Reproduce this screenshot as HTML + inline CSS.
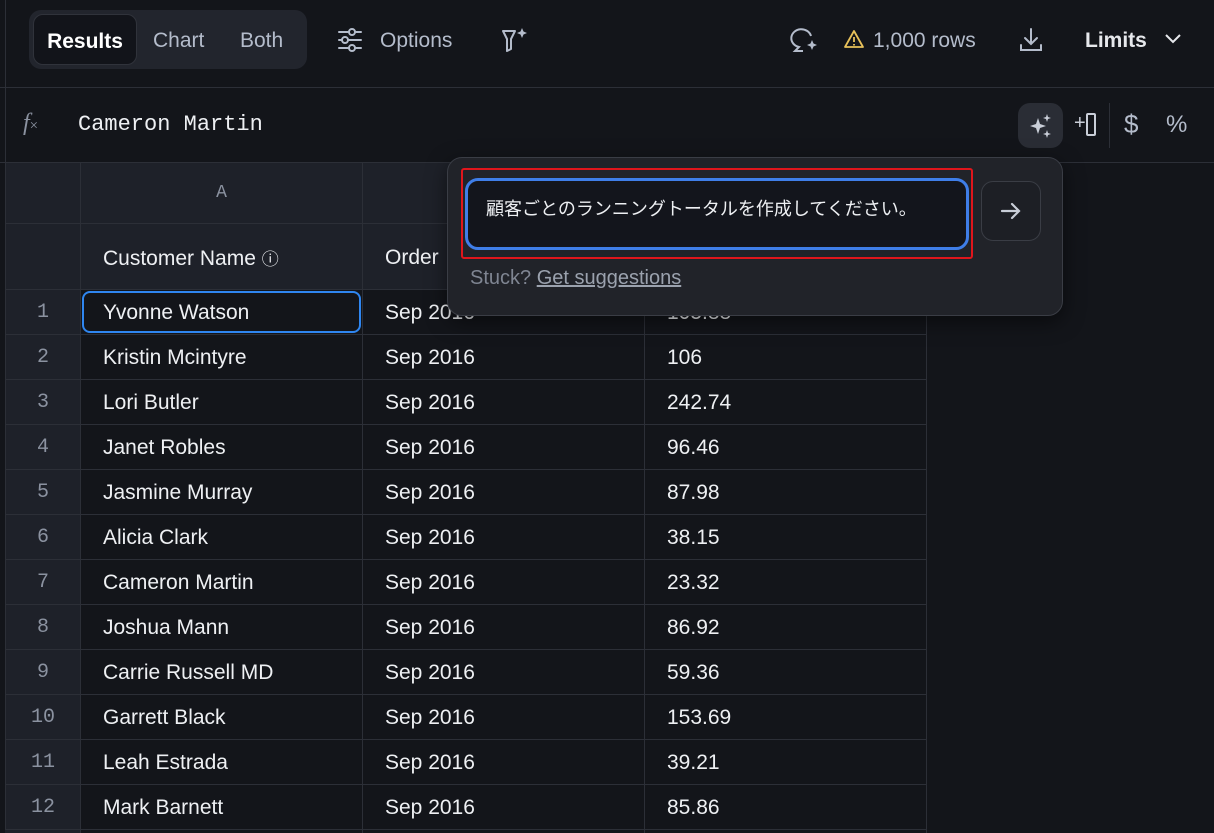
<!DOCTYPE html>
<html style="width:1214px;height:833px;overflow:hidden"><head><meta charset="utf-8"><style>
*{box-sizing:border-box;margin:0;padding:0}
body{width:1214px;height:833px;background:#13151a;font-family:"Liberation Sans","Noto Sans CJK JP",sans-serif;color:#e6e8ec;position:relative;overflow:hidden}
.abs{position:absolute}
.vl{position:absolute;left:5px;top:0;width:1px;height:833px;background:#2c2f37}
.tabs{left:29px;top:10px;width:278px;height:59px;background:#22252d;border-radius:12px}
.tab{position:absolute;top:4px;height:51px;line-height:53px;font-size:21px;color:#b4bccb}
.sel{left:4px;width:104px;background:#12141a;border:1px solid #30333b;border-radius:10px;color:#fff;text-align:center;font-weight:bold}
.hl{position:absolute;left:0;width:1214px;height:1px;background:#2c2f37}
.mono{font-family:"Liberation Mono","DejaVu Sans Mono",monospace}
table{position:absolute;left:5px;top:162px;border-collapse:collapse}
td{border:1px solid #2c2f37;height:45px;font-size:21px;padding-left:22px;padding-top:2px;color:#eef0f3}
td.n{width:75px;background:#1e2129;color:#8b92a0;text-align:center;padding:0;font-family:"Liberation Mono","DejaVu Sans Mono",monospace;font-size:20px}
td.c{width:282px}
tr.h td{background:#1e2129}
</style></head><body>
<div class="vl"></div>
<div class="abs" style="left:5px;top:829px;width:75px;height:4px;background:#1e2129"></div>
<div class="abs" style="left:80px;top:829px;width:1px;height:4px;background:#2c2f37"></div>
<div class="abs" style="left:362px;top:829px;width:1px;height:4px;background:#2c2f37"></div>
<div class="abs" style="left:644px;top:829px;width:1px;height:4px;background:#2c2f37"></div>
<div class="abs" style="left:926px;top:829px;width:1px;height:4px;background:#2c2f37"></div>
<div class="abs tabs">
 <div class="tab sel">Results</div>
 <div class="tab" style="left:124px">Chart</div>
 <div class="tab" style="left:211px">Both</div>
</div>
<svg class="abs" style="left:337px;top:27px" width="26" height="26" viewBox="0 0 26 26" fill="none" stroke="#b4bccb" stroke-width="2" stroke-linecap="round"><path d="M2 5h22M2 13h22M2 21h22"/><circle cx="15" cy="5" r="3" fill="#13151a"/><circle cx="8" cy="13" r="3" fill="#13151a"/><circle cx="15" cy="21" r="3" fill="#13151a"/></svg>
<div class="abs" style="left:380px;top:29px;font-size:21px;color:#b4bccb">Options</div>
<svg class="abs" style="left:500px;top:26px" width="30" height="28" viewBox="0 0 30 28" fill="none" stroke="#b4bccb" stroke-width="2" stroke-linejoin="round"><path d="M3 5h12l-4 8v10l-4 2V13z"/><path d="M22 2l1.5 3.5 3.5 1.5-3.5 1.5L22 12l-1.5-3.5L17 7l3.5-1.5z" fill="#b4bccb" stroke="none"/></svg>
<svg class="abs" style="left:790px;top:27px" width="30" height="28" viewBox="0 0 30 28" fill="none" stroke="#b4bccb" stroke-width="2"><path d="M21 9a10 9 0 1 0-12 11l-4 4h8"/><path d="M22 13l1.5 3.5 3.5 1.5-3.5 1.5L22 23l-1.5-3.5L17 18l3.5-1.5z" fill="#b4bccb" stroke="none"/></svg>
<svg class="abs" style="left:843px;top:29px" width="22" height="20" viewBox="0 0 22 20" fill="none" stroke="#e8c15a" stroke-width="1.8" stroke-linejoin="round"><path d="M11 2L20 18H2z"/><path d="M11 8v5M11 15v1.5"/></svg>
<div class="abs" style="left:873px;top:29px;font-size:21px;color:#b4bccb">1,000 rows</div>
<svg class="abs" style="left:1018px;top:27px" width="26" height="26" viewBox="0 0 26 26" fill="none" stroke="#b4bccb" stroke-width="2" stroke-linecap="round"><path d="M13 2v14M7 11l6 6 6-6M3 18v5h20v-5"/></svg>
<div class="abs" style="left:1085px;top:29px;font-size:21px;color:#e6e8ec;font-weight:bold">Limits</div>
<svg class="abs" style="left:1163px;top:31px" width="20" height="14" viewBox="0 0 20 14" fill="none" stroke="#e6e8ec" stroke-width="2"><path d="M3 4l7 7 7-7"/></svg>
<div class="hl" style="top:87px"></div>
<div class="abs" style="left:23px;top:110px;font-size:24px;font-style:italic;font-family:'Liberation Serif',serif;color:#8b92a0">f<span style="font-size:15px;font-style:normal">×</span></div>
<div class="abs mono" style="left:78px;top:112px;font-size:22px;color:#eef0f3">Cameron Martin</div>
<div class="abs" style="left:1018px;top:103px;width:45px;height:45px;background:#2a2d35;border-radius:12px"></div>
<svg class="abs" style="left:1027px;top:112px" width="28" height="28" viewBox="0 0 28 28" fill="#c9ced8"><path d="M11 6l2 6 6 2-6 2-2 6-2-6-6-2 6-2z"/><path d="M20 2l1 3 3 1-3 1-1 3-1-3-3-1 3-1zM20 18l1 3 3 1-3 1-1 3-1-3-3-1 3-1z"/></svg>
<div class="abs" style="left:1074px;top:112px;font-size:20px;color:#c9ced8">+</div>
<div class="abs" style="left:1086px;top:113px;width:10px;height:23px;border:2px solid #c9ced8;border-radius:2px"></div>
<div class="abs" style="left:1109px;top:103px;width:1px;height:45px;background:#2c2f37"></div>
<div class="abs" style="left:1124px;top:109px;font-size:26px;color:#b4bccb">$</div>
<div class="abs" style="left:1166px;top:111px;font-size:24px;color:#b4bccb">%</div>
<div class="hl" style="top:162px"></div>
<table>
<tr class="h"><td class="n" style="height:61px"></td><td class="c mono" style="text-align:center;padding:0;color:#8b92a0;font-size:18px">A</td><td class="c"></td><td class="c"></td></tr>
<tr class="h"><td class="n" style="height:66px"></td><td class="c">Customer Name <span style="font-size:17px">ⓘ</span></td><td class="c">Order</td><td class="c"></td></tr>
<tr><td class="n">1</td><td class="c" style="position:relative"><div style="position:absolute;left:1px;top:1px;right:1px;bottom:1px;border:2px solid #2f86f0;border-radius:8px"></div>Yvonne Watson</td><td class="c">Sep 2016</td><td class="c">105.88</td></tr>
<tr><td class="n">2</td><td class="c">Kristin Mcintyre</td><td class="c">Sep 2016</td><td class="c">106</td></tr>
<tr><td class="n">3</td><td class="c">Lori Butler</td><td class="c">Sep 2016</td><td class="c">242.74</td></tr>
<tr><td class="n">4</td><td class="c">Janet Robles</td><td class="c">Sep 2016</td><td class="c">96.46</td></tr>
<tr><td class="n">5</td><td class="c">Jasmine Murray</td><td class="c">Sep 2016</td><td class="c">87.98</td></tr>
<tr><td class="n">6</td><td class="c">Alicia Clark</td><td class="c">Sep 2016</td><td class="c">38.15</td></tr>
<tr><td class="n">7</td><td class="c">Cameron Martin</td><td class="c">Sep 2016</td><td class="c">23.32</td></tr>
<tr><td class="n">8</td><td class="c">Joshua Mann</td><td class="c">Sep 2016</td><td class="c">86.92</td></tr>
<tr><td class="n">9</td><td class="c">Carrie Russell MD</td><td class="c">Sep 2016</td><td class="c">59.36</td></tr>
<tr><td class="n">10</td><td class="c">Garrett Black</td><td class="c">Sep 2016</td><td class="c">153.69</td></tr>
<tr><td class="n">11</td><td class="c">Leah Estrada</td><td class="c">Sep 2016</td><td class="c">39.21</td></tr>
<tr><td class="n">12</td><td class="c">Mark Barnett</td><td class="c">Sep 2016</td><td class="c">85.86</td></tr>
</table>
<div class="abs" style="left:447px;top:157px;width:616px;height:159px;background:#212329;border:1px solid #3a3d45;border-radius:15px;box-shadow:0 6px 20px rgba(0,0,0,.5)">
 <div class="abs" style="left:13px;top:10px;width:512px;height:91px;border:2px solid #e0161c;border-radius:3px"></div>
 <div class="abs" style="left:17px;top:20px;width:504px;height:72px;background:#13151c;border:3px solid #3f7ee8;border-radius:13px"></div>
 <div class="abs" style="left:38px;top:37px;font-size:18px;color:#eef0f3;font-family:'Noto Sans CJK JP',sans-serif">顧客ごとのランニングトータルを作成してください。</div>
 <div class="abs" style="left:533px;top:23px;width:60px;height:60px;border:1px solid #3a3d45;border-radius:12px;background:#1d1f25"></div>
 <svg class="abs" style="left:551px;top:41px" width="24" height="24" viewBox="0 0 24 24" fill="none" stroke="#c9ced8" stroke-width="2.2" stroke-linecap="round"><path d="M3 12h17M13 5l7 7-7 7"/></svg>
 <div class="abs" style="left:22px;top:109px;font-size:20px;color:#7f8592">Stuck? <span style="text-decoration:underline;color:#9ba2ae">Get suggestions</span></div>
</div>
</body></html>
